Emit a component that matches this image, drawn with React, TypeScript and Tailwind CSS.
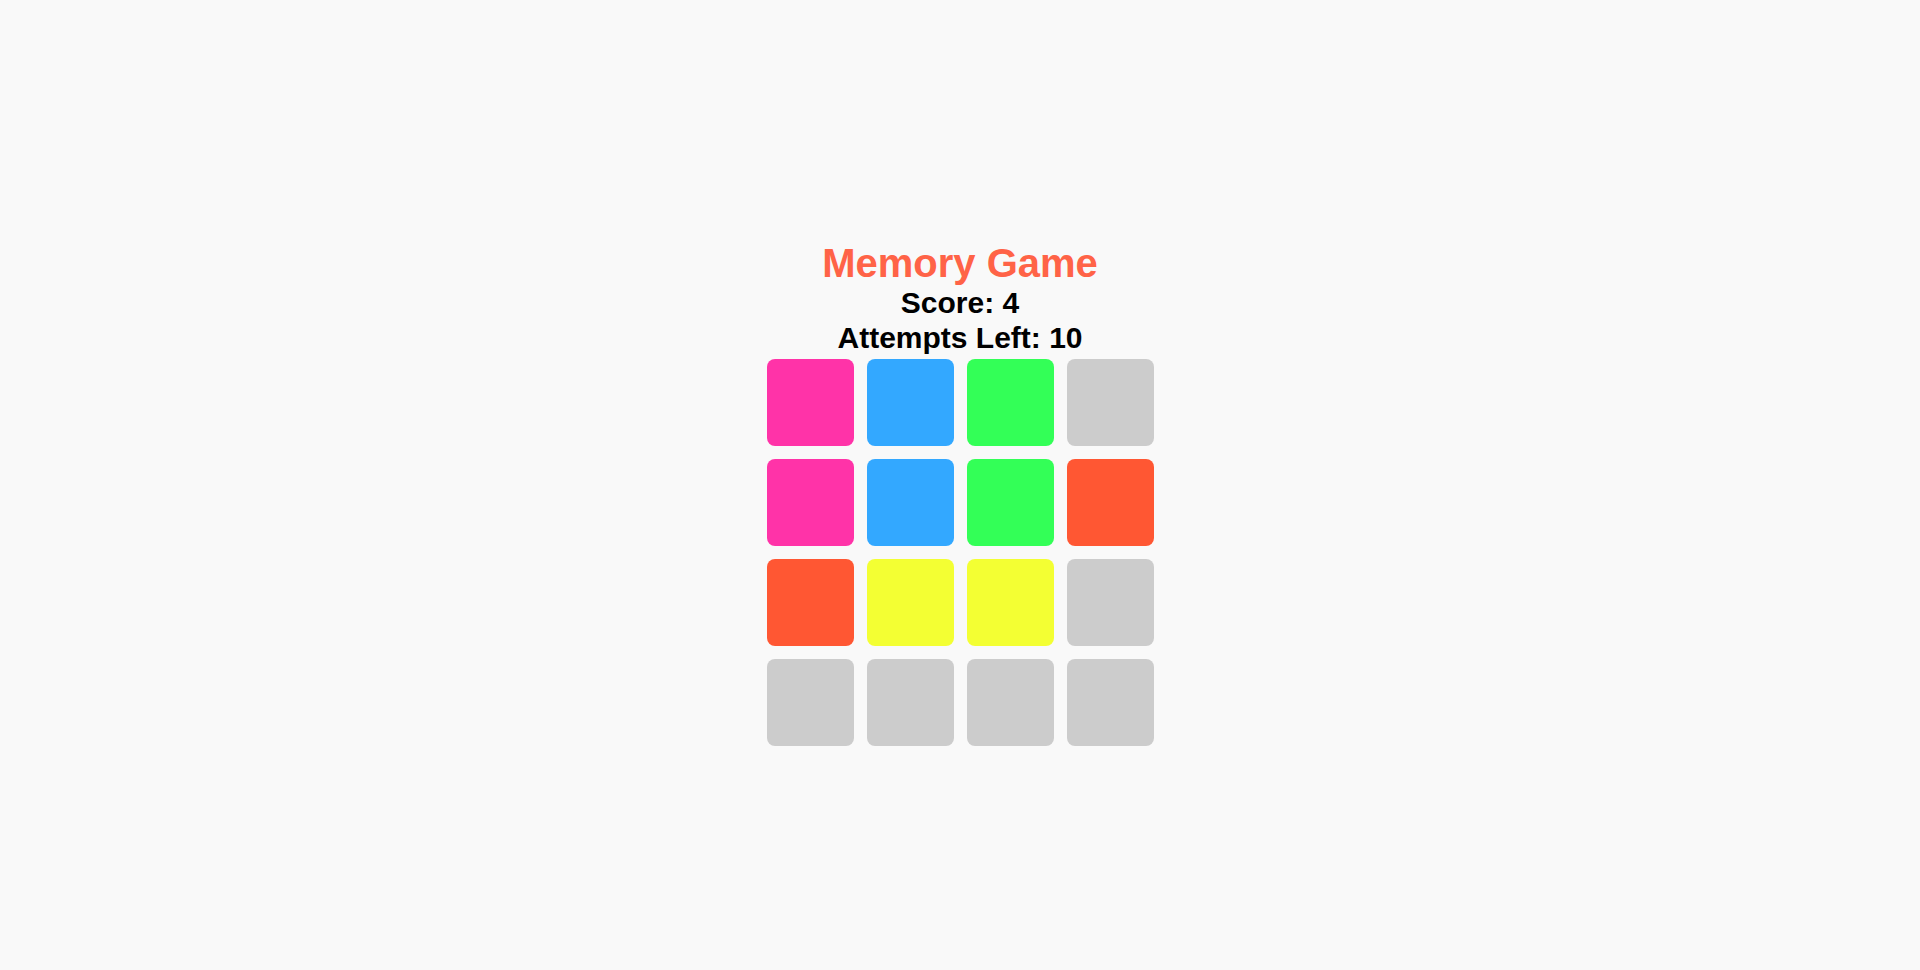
import React from "react";

const cards = [
  "#ff33a8", "#33a8ff", "#33ff57", "#cccccc",
  "#ff33a8", "#33a8ff", "#33ff57", "#ff5733",
  "#ff5733", "#f3ff33", "#f3ff33", "#cccccc",
  "#cccccc", "#cccccc", "#cccccc", "#cccccc",
];

export default function App() {
  return (
    <div
      className="w-full h-[970px] bg-[#f9f9f9] flex flex-col items-center pt-[240px]"
      style={{ fontFamily: '"Liberation Sans", Arial, sans-serif' }}
    >
      <div className="text-[40px] font-bold text-[#ff6347] leading-[46px]">Memory Game</div>
      <div className="text-[30px] font-bold text-black leading-[34.5px]">Score: 4</div>
      <div className="text-[30px] font-bold text-black leading-[34.5px]">Attempts Left: 10</div>
      <div className="grid grid-cols-4 gap-[13px] mt-[4px]">
        {cards.map((c, i) => (
          <div
            key={i}
            className="w-[87px] h-[87px] rounded-[8px]"
            style={{ backgroundColor: c }}
          />
        ))}
      </div>
    </div>
  );
}
